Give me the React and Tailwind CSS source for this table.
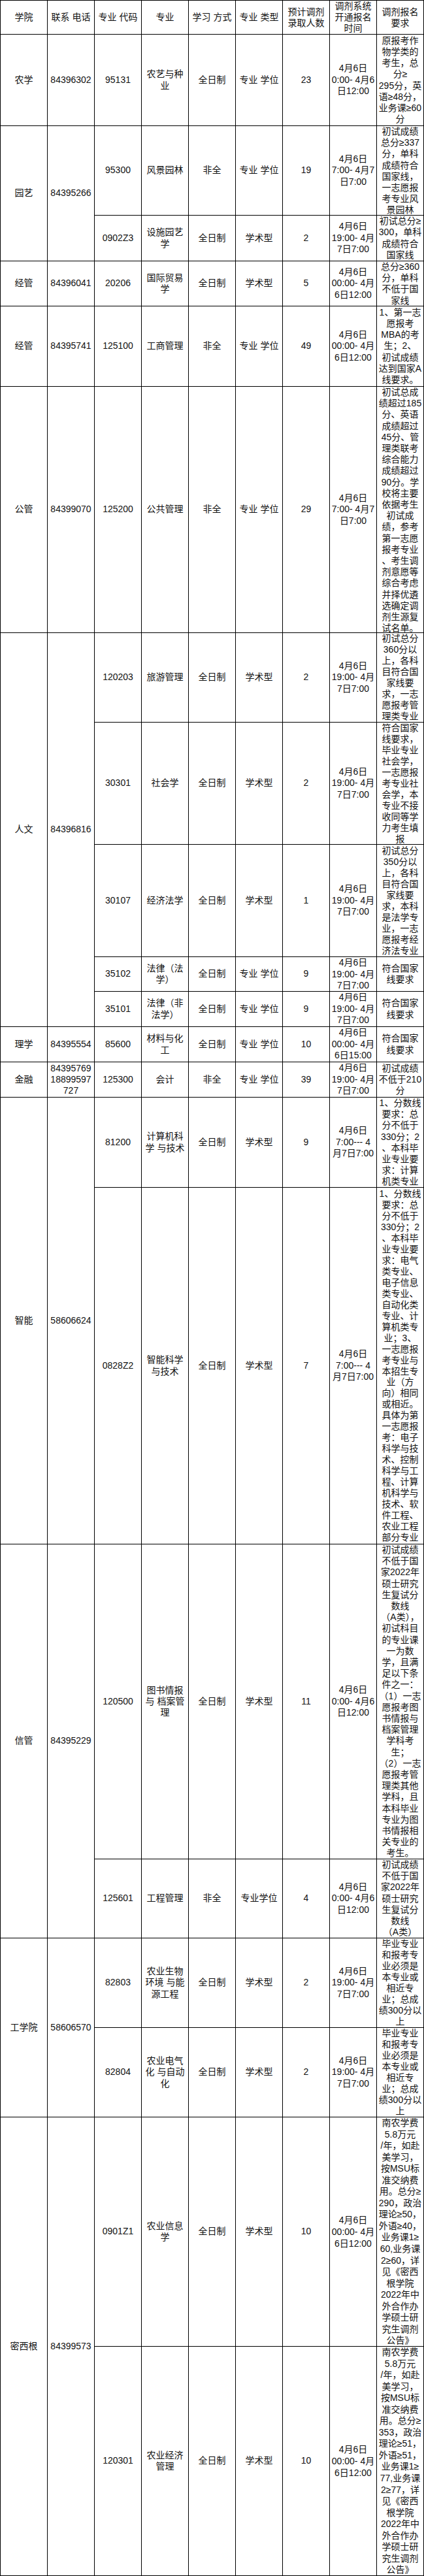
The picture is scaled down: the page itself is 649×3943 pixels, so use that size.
import React from "react";

const TA = "4月6日\n0:00- 4月6\n日12:00";
const TB = "4月6日\n7:00- 4月7\n日7:00";
const TC = "4月6日\n19:00- 4月\n7日7:00";
const TD = "4月6日\n00:00- 4月\n6日12:00";
const TE = "4月6日\n00:00- 4月\n6日15:00";
const TF = "4月6日\n7:00--- 4\n月7日7:00";

const L16 = "leading-[16.7px]";
const L17 = "leading-[17px]";
const LT = "leading-[17.6px]";
const LM = "leading-[17.55px]";

const c = (t, opts = {}) => ({ t, ...opts });
const tm = (t) => ({ t, lh: LT });

const GUOJIA = "符合国家\n线要求";
const GONGXUE = "毕业专业\n和报考专\n业必须是\n本专业或\n相近专\n业；总成\n绩300分以\n上";

const cells = [
  // header
  c("学院"), c("联系 电话"), c("专业 代码"), c("专业"), c("学习 方式"), c("专业 类型"),
  c("预计调剂\n录取人数", { lh: L16 }), c("调剂系统\n开通报名\n时间", { lh: L16 }), c("调剂报名\n要求", { lh: L16 }),
  // 农学
  c("农学"), c("84396302"), c("95131"), c("农艺与种\n业"), c("全日制"), c("专业 学位"), c("23"), tm(TA),
  c("原报考作\n物学类的\n考生，总\n分≥\n295分，英\n语≥48分，\n业务课≥60\n分"),
  // 园艺
  c("园艺", { rs: 2 }), c("84395266", { rs: 2 }), c("95300"), c("风景园林"), c("非全"), c("专业 学位"), c("19"), tm(TB),
  c("初试成绩\n总分≥337\n分，单科\n成绩符合\n国家线，\n一志愿报\n考专业风\n景园林"),
  c("0902Z3"), c("设施园艺\n学"), c("全日制"), c("学术型"), c("2"), tm(TC),
  c("初试总分≥\n300，单科\n成绩符合\n国家线"),
  // 经管
  c("经管"), c("84396041"), c("20206"), c("国际贸易\n学"), c("全日制"), c("学术型"), c("5"), tm(TD),
  c("总分≥360\n分，单科\n不低于国\n家线"),
  c("经管"), c("84395741"), c("125100"), c("工商管理"), c("非全"), c("专业 学位"), c("49"), tm(TD),
  c("1、第一志\n愿报考\nMBA的考\n生；2、\n初试成绩\n达到国家A\n线要求。"),
  // 公管
  c("公管"), c("84399070"), c("125200"), c("公共管理"), c("非全"), c("专业 学位"), c("29"), tm(TB),
  c("初试总成\n绩超过185\n分、英语\n成绩超过\n45分、管\n理类联考\n综合能力\n成绩超过\n90分。学\n校将主要\n依据考生\n初试成\n绩，参考\n第一志愿\n报考专业\n、考生调\n剂意愿等\n综合考虑\n并择优遴\n选确定调\n剂生源复\n试名单。"),
  // 人文
  c("人文", { rs: 5 }), c("84396816", { rs: 5 }), c("120203"), c("旅游管理"), c("全日制"), c("学术型"), c("2"), tm(TC),
  c("初试总分\n360分以\n上，各科\n目符合国\n家线要\n求，一志\n愿报考管\n理类专业", { lh: L17 }),
  c("30301"), c("社会学"), c("全日制"), c("学术型"), c("2"), tm(TC),
  c("符合国家\n线要求，\n毕业专业\n社会学，\n一志愿报\n考专业社\n会学，本\n专业不接\n收同等学\n力考生填\n报", { lh: L17 }),
  c("30107"), c("经济法学"), c("全日制"), c("学术型"), c("1"), tm(TC),
  c("初试总分\n350分以\n上，各科\n目符合国\n家线要\n求，本科\n是法学专\n业，一志\n愿报考经\n济法专业", { lh: L17 }),
  c("35102"), c("法律（法\n学）"), c("全日制"), c("专业 学位"), c("9"), tm(TC), c(GUOJIA),
  c("35101"), c("法律（非\n法学）"), c("全日制"), c("专业 学位"), c("9"), tm(TC), c(GUOJIA),
  // 理学
  c("理学"), c("84395554"), c("85600"), c("材料与化\n工"), c("全日制"), c("专业 学位"), c("10"), tm(TE), c(GUOJIA),
  // 金融
  c("金融"), c("84395769\n18899597\n727"), c("125300"), c("会计"), c("非全"), c("专业 学位"), c("39"), tm(TC),
  c("初试成绩\n不低于210\n分"),
  // 智能
  c("智能", { rs: 2 }), c("58606624", { rs: 2 }), c("81200"), c("计算机科\n学 与技术"), c("全日制"), c("学术型"), c("9"), tm(TF),
  c("1、分数线\n要求：总\n分不低于\n330分；2\n、本科毕\n业专业要\n求：计算\n机类专业"),
  c("0828Z2"), c("智能科学\n与技术"), c("全日制"), c("学术型"), c("7"), tm(TF),
  c("1、分数线\n要求：总\n分不低于\n330分；2\n、本科毕\n业专业要\n求：电气\n类专业、\n电子信息\n类专业、\n自动化类\n专业、计\n算机类专\n业；3、\n一志愿报\n考专业与\n本招生专\n业（方\n向）相同\n或相近。\n具体为第\n一志愿报\n考：电子\n科学与技\n术、控制\n科学与工\n程、计算\n机科学与\n技术、软\n件工程、\n农业工程\n部分专业", { lh: "leading-[16.95px]" }),
  // 信管
  c("信管", { rs: 2 }), c("84395229", { rs: 2 }), c("120500"), c("图书情报\n与 档案管\n理"), c("全日制"), c("学术型"), c("11"), tm(TA),
  c("初试成绩\n不低于国\n家2022年\n硕士研究\n生复试分\n数线\n（A类），\n初试科目\n的专业课\n一为数\n学，且满\n足以下条\n件之一：\n（1）一志\n愿报考图\n书情报与\n档案管理\n学科考\n生；\n（2）一志\n愿报考管\n理类其他\n学科，且\n本科毕业\n专业为图\n书情报相\n关专业的\n考生。"),
  c("125601"), c("工程管理"), c("非全"), c("专业学位"), c("4"), tm(TA),
  c("初试成绩\n不低于国\n家2022年\n硕士研究\n生复试分\n数线\n（A类）"),
  // 工学院
  c("工学院", { rs: 2 }), c("58606570", { rs: 2 }), c("82803"), c("农业生物\n环境 与能\n源工程"), c("全日制"), c("学术型"), c("2"), tm(TC),
  c(GONGXUE, { lh: L17 }),
  c("82804"), c("农业电气\n化 与自动\n化"), c("全日制"), c("学术型"), c("2"), tm(TC),
  c(GONGXUE, { lh: L17 }),
  // 密西根
  c("密西根", { rs: 2 }), c("84399573", { rs: 2 }), c("0901Z1"), c("农业信息\n学"), c("全日制"), c("学术型"), c("10"), c(TD, { lh: "leading-[18px]" }),
  c("南农学费\n5.8万元\n/年，如赴\n美学习，\n按MSU标\n准交纳费\n用。总分≥\n290，政治\n理论≥50，\n外语≥40，\n业务课1≥\n60,业务课\n2≥60，详\n见《密西\n根学院\n2022年中\n外合作办\n学硕士研\n究生调剂\n公告》", { lh: LM }),
  c("120301"), c("农业经济\n管理"), c("全日制"), c("学术型"), c("10"), c(TD, { lh: "leading-[18px]" }),
  c("南农学费\n5.8万元\n/年，如赴\n美学习，\n按MSU标\n准交纳费\n用。总分≥\n353，政治\n理论≥51，\n外语≥51，\n业务课1≥\n77,业务课\n2≥77，详\n见《密西\n根学院\n2022年中\n外合作办\n学硕士研\n究生调剂\n公告》", { lh: LM }),
];

function Cell({ t, rs, lh }) {
  const span = rs === 2 ? "row-span-2" : rs === 5 ? "row-span-5" : "";
  return (
    <div className={`${span} border-r border-b border-black overflow-hidden flex flex-col min-h-0`}>
      <div className={`my-auto whitespace-pre text-center ${lh || "leading-[17.2px]"}`}>{t}</div>
    </div>
  );
}

export default function App() {
  return (
    <div className="w-[649px] bg-white">
      <div className="grid grid-cols-[repeat(9,72px)] grid-rows-[52px_140px_137px_70px_69px_123px_377px_137px_187px_172px_53px_54px_54px_54px_138px_546px_482px_121px_137px_137px_351px_351px] border-l border-t border-black text-[14px] text-[#111] [font-family:'Liberation_Sans','Noto_Sans_CJK_SC',sans-serif]">
        {cells.map((cell, i) => (
          <Cell key={i} {...cell} />
        ))}
      </div>
    </div>
  );
}
